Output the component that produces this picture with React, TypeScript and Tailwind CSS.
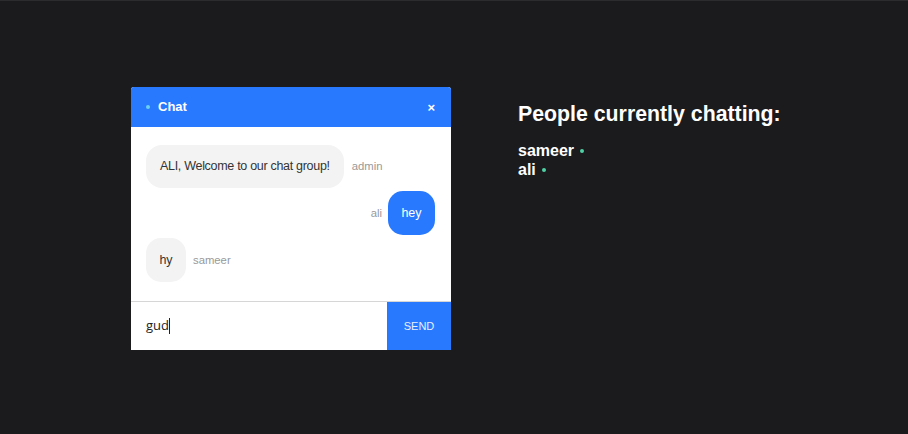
import React from "react";

export default function App() {
  return (
    <div
      className="w-[908px] h-[434px] bg-[#1b1b1d] border-t border-[#2c2c2e] flex items-start pl-[131px] pt-[86px]"
      style={{ fontFamily: '"Liberation Sans", Arial, sans-serif' }}
    >
      <div className="w-[320px] flex flex-col bg-white rounded-t-[3px] overflow-hidden">
        <div className="h-[40px] bg-[#2979ff] flex items-center pl-[15px] pr-[16px]">
          <span className="w-[4px] h-[4px] rounded-full bg-[#6ad1f0] mr-[8px]" />
          <span className="text-white font-bold text-[13px]">Chat</span>
          <span className="ml-auto text-white font-bold text-[13px] leading-none">×</span>
        </div>
        <div className="h-[174px] flex flex-col gap-[3px] pt-[18px] pl-[15px] pr-[16px]">
          <div className="flex items-center gap-[8px]">
            <div className="bg-[#f3f3f3] rounded-[16px] px-[14px] h-[43px] flex items-center text-[12.5px] tracking-[-0.3px] text-[#333]">
              ALI, Welcome to our chat group!
            </div>
            <span className="text-[11.3px] text-[#999]">admin</span>
          </div>
          <div className="flex items-center justify-end gap-[6px]">
            <span className="text-[11.3px] text-[#999]">ali</span>
            <div className="bg-[#2979ff] rounded-[15px] w-[47px] h-[44px] flex items-center justify-center text-[12.5px] text-white">
              hey
            </div>
          </div>
          <div className="flex items-center gap-[7px]">
            <div className="bg-[#f3f3f3] rounded-[15px] w-[40px] h-[44px] flex items-center justify-center text-[12.5px] text-[#333]">
              hy
            </div>
            <span className="text-[11.3px] text-[#999]">sameer</span>
          </div>
        </div>
        <div className="h-[49px] border-t border-[#d6d6d6] flex">
          <div className="flex-1 flex items-center pl-[15px]">
            <span className="text-[13px] text-[#222]" style={{ fontFamily: '"Open Sans", sans-serif' }}>gud</span>
            <span className="w-[1px] h-[16px] bg-[#222]" />
          </div>
          <div className="w-[64px] bg-[#2979ff] flex items-center justify-center text-[11px] text-[#e8f0ff]">
            SEND
          </div>
        </div>
      </div>
      <div className="ml-[67px] mt-[14px] flex flex-col">
        <div className="text-white font-bold text-[21.3px] leading-[26px]">People currently chatting:</div>
        <div className="mt-[14px] flex flex-col">
          <div className="flex items-center text-white font-bold text-[16px] leading-[19px]">
            sameer
            <span className="w-[4px] h-[4px] rounded-full bg-[#4fd1a5] ml-[6px]" />
          </div>
          <div className="flex items-center text-white font-bold text-[16px] leading-[19px]">
            ali
            <span className="w-[4px] h-[4px] rounded-full bg-[#4fd1a5] ml-[6px]" />
          </div>
        </div>
      </div>
    </div>
  );
}
